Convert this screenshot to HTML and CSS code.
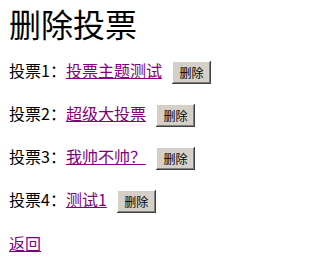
FILE: index.html
```html
<!DOCTYPE html>
<html>
<head>
<meta charset="utf-8">
<title>删除投票</title>
<link rel="stylesheet" href="styles.css">
</head>
<body>
<h1 class="title">删除投票</h1>
<div class="list">
  <div class="row"><span class="label">投票1：</span><a class="link" href="#">投票主题测试</a><button class="btn" type="button">删除</button></div>
  <div class="row"><span class="label">投票2：</span><a class="link" href="#">超级大投票</a><button class="btn" type="button">删除</button></div>
  <div class="row"><span class="label">投票3：</span><a class="link" href="#">我帅不帅？</a><button class="btn" type="button">删除</button></div>
  <div class="row"><span class="label">投票4：</span><a class="link" href="#">测试1</a><button class="btn" type="button">删除</button></div>
</div>
<div class="back"><a class="link" href="#">返回</a></div>
</body>
</html>
```
FILE: styles.css
```css
html, body {
  margin: 0;
  padding: 0;
  background: #ffffff;
}
body {
  padding: 0 8px 0 9px;
  font-family: "Noto Sans CJK SC", "Liberation Serif", serif;
  color: #000000;
  font-size: 16px;
}
.title {
  margin: 0;
  font-size: 32px;
  line-height: normal;
  font-weight: normal;
}
.list {
  margin-top: 15px;
  display: flex;
  flex-direction: column;
  gap: 20px;
}
.row {
  display: flex;
  align-items: center;
  height: 23px;
}
.label {
  line-height: 20px;
  margin-top: -6px;
}
.link {
  color: #800080;
  text-decoration: underline;
  line-height: 20px;
  margin-top: -6px;
}
.btn {
  margin-left: 10px;
  width: 39px;
  height: 23px;
  padding: 0;
  border: none;
  background: #d4d0c8;
  font-family: "Noto Sans CJK SC", sans-serif;
  font-size: 12px;
  color: #000;
  box-shadow: inset -1px -1px #404040, inset 1px 1px #ffffff, inset -2px -2px #808080, inset 2px 2px #d4d0c8;
}
.back {
  margin-top: 20px;
  line-height: 20px;
}
```
